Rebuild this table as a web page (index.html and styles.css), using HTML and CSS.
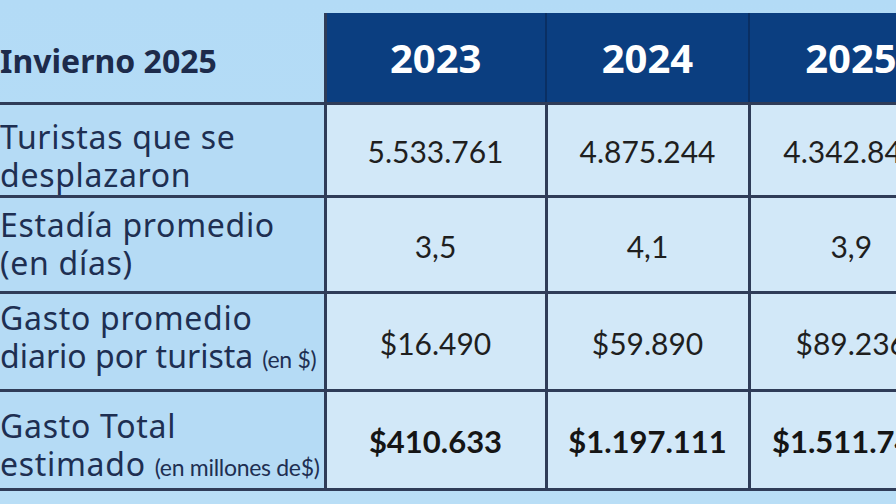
FILE: index.html
```html
<!DOCTYPE html>
<html lang="es">
<head>
<meta charset="utf-8">
<title>Invierno 2025</title>
<link rel="stylesheet" href="styles.css">
</head>
<body>
<div class="page">
  <table class="stats">
    <colgroup>
      <col class="c-label">
      <col class="c-y1">
      <col class="c-y2">
      <col class="c-y3">
    </colgroup>
    <thead>
      <tr class="head">
        <th class="label title">Invierno 2025</th>
        <th class="year">2023</th>
        <th class="year">2024</th>
        <th class="year">2025</th>
      </tr>
    </thead>
    <tbody>
      <tr class="r1">
        <th class="label">Turistas que se<br>desplazaron</th>
        <td>5.533.761</td>
        <td>4.875.244</td>
        <td>4.342.846</td>
      </tr>
      <tr class="r2">
        <th class="label">Estadía promedio<br>(en días)</th>
        <td>3,5</td>
        <td>4,1</td>
        <td>3,9</td>
      </tr>
      <tr class="r3">
        <th class="label">Gasto promedio<br><span class="tight">diario por turista</span> <span class="unit">(en $)</span></th>
        <td>$16.490</td>
        <td>$59.890</td>
        <td>$89.236</td>
      </tr>
      <tr class="r4 total">
        <th class="label">Gasto Total<br>estimado <span class="unit">(en millones de$)</span></th>
        <td>$410.633</td>
        <td>$1.197.111</td>
        <td>$1.511.745</td>
      </tr>
    </tbody>
  </table>
</div>
</body>
</html>
```

FILE: styles.css
```css
html, body {
  margin: 0;
  padding: 0;
}

body {
  width: 896px;
  height: 504px;
  overflow: hidden;
  background: linear-gradient(180deg, #b3dbf6 0%, #b6ddf6 60%, #b9def6 100%);
}

.page {
  padding-top: 13px;
  width: 980px;
}

.stats {
  border-collapse: collapse;
  table-layout: fixed;
  width: 952px;
}

.c-label { width: 325px; }
.c-y1 { width: 221px; }
.c-y2 { width: 203px; }
.c-y3 { width: 203px; }

.stats th,
.stats td {
  padding: 0;
  vertical-align: middle;
}

.head { height: 90px; }
.r1 { height: 93px; }
.r2 { height: 96px; }
.r3 { height: 98px; }
.r4 { height: 99px; }

.label {
  text-align: left;
  font-family: "Noto Sans", "Open Sans", sans-serif;
  font-weight: 400;
  font-size: 32px;
  letter-spacing: 0.7px;
  line-height: 38px;
  color: #1e2f52;
  background: #b5dbf5;
  border-right: 3px solid #2f3c58;
  border-bottom: 3px solid #2f3c58;
  padding-left: 0;
  padding-top: 3px;
  white-space: nowrap;
}

.r1 .label { padding-top: 13px; }
.r3 .label { padding-top: 0; padding-bottom: 6px; }
.r4 .label { padding-top: 14px; }

.tight {
  letter-spacing: 0;
}

.label.title {
  font-weight: 700;
  font-size: 32px;
  letter-spacing: 0;
  color: #1d2b4b;
  background: transparent;
  padding-top: 8px;
}

.unit {
  font-family: "Lato", sans-serif;
  font-size: 23px;
  letter-spacing: -0.3px;
  color: #1e2f52;
}

.year {
  background: #0b3e80;
  color: #ffffff;
  font-family: "Open Sans", sans-serif;
  font-weight: 700;
  font-size: 40px;
  text-align: center;
  padding-top: 20px;
  border-left: 2px solid #0a2f63;
  border-bottom: 3px solid #2f3c58;
}

.stats td {
  background: #d2e8f8;
  text-align: center;
  font-family: "Lato", sans-serif;
  font-size: 30px;
  color: #1f1f1f;
  border-left: 3px solid #2f3c58;
  border-bottom: 3px solid #2f3c58;
  padding-top: 3px;
}

.total td {
  font-weight: 700;
  font-size: 31px;
  color: #151515;
}
```
